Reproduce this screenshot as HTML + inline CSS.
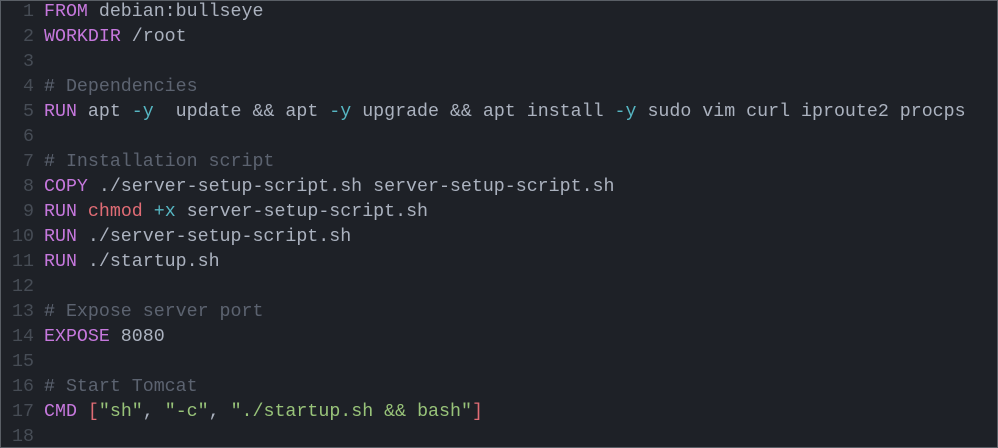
<!DOCTYPE html>
<html><head><style>
html,body{margin:0;padding:0;background:#1e2127;}
.w{width:996px;height:446px;border:1px solid #5a5f66;background:#1e2127;overflow:hidden;position:relative;}
pre{margin:0;position:absolute;top:-1px;left:0;font-family:"Liberation Mono",monospace;font-size:18.3px;line-height:25px;color:#abb2bf;}
.n{display:inline-block;width:33px;text-align:right;color:#464c55;margin-right:10px;}
.k{color:#c678dd}.c{color:#5c6370}.f{color:#56b6c2}.r{color:#e06c75}.g{color:#98c379}
</style></head><body><div class="w"><pre><span class="n">1</span><span class="k">FROM</span> debian:bullseye
<span class="n">2</span><span class="k">WORKDIR</span> /root
<span class="n">3</span>
<span class="n">4</span><span class="c"># Dependencies</span>
<span class="n">5</span><span class="k">RUN</span> apt <span class="f">-y</span>  update &amp;&amp; apt <span class="f">-y</span> upgrade &amp;&amp; apt install <span class="f">-y</span> sudo vim curl iproute2 procps
<span class="n">6</span>
<span class="n">7</span><span class="c"># Installation script</span>
<span class="n">8</span><span class="k">COPY</span> ./server-setup-script.sh server-setup-script.sh
<span class="n">9</span><span class="k">RUN</span> <span class="r">chmod</span> <span class="f">+x</span> server-setup-script.sh
<span class="n">10</span><span class="k">RUN</span> ./server-setup-script.sh
<span class="n">11</span><span class="k">RUN</span> ./startup.sh
<span class="n">12</span>
<span class="n">13</span><span class="c"># Expose server port</span>
<span class="n">14</span><span class="k">EXPOSE</span> 8080
<span class="n">15</span>
<span class="n">16</span><span class="c"># Start Tomcat</span>
<span class="n">17</span><span class="k">CMD</span> <span class="r">[</span><span class="g">"sh"</span>, <span class="g">"-c"</span>, <span class="g">"./startup.sh &amp;&amp; bash"</span><span class="r">]</span>
<span class="n">18</span></pre></div></body></html>
